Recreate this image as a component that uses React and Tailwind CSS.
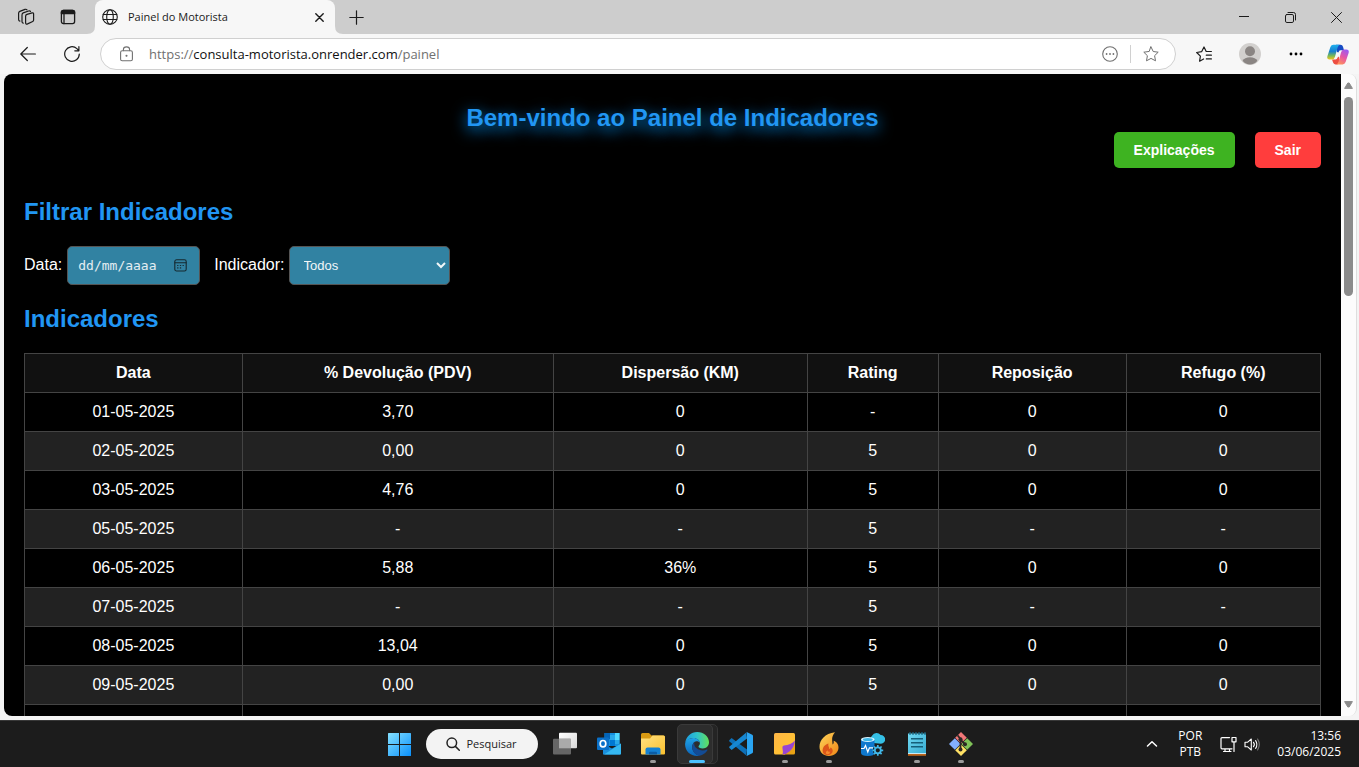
import React from "react";

const rows = [
  ["01-05-2025", "3,70", "0", "-", "0", "0"],
  ["02-05-2025", "0,00", "0", "5", "0", "0"],
  ["03-05-2025", "4,76", "0", "5", "0", "0"],
  ["05-05-2025", "-", "-", "5", "-", "-"],
  ["06-05-2025", "5,88", "36%", "5", "0", "0"],
  ["07-05-2025", "-", "-", "5", "-", "-"],
  ["08-05-2025", "13,04", "0", "5", "0", "0"],
  ["09-05-2025", "0,00", "0", "5", "0", "0"],
  ["", "", "", "", "", ""],
];

const headers = ["Data", "% Devolução (PDV)", "Dispersão (KM)", "Rating", "Reposição", "Refugo (%)"];

function Line({ size = 16, className = "", width = 1.1, box = 16, children }) {
  return (
    <svg
      width={size}
      height={size}
      viewBox={`0 0 ${box} ${box}`}
      fill="none"
      stroke="currentColor"
      strokeWidth={width}
      strokeLinecap="round"
      strokeLinejoin="round"
      className={`shrink-0 ${className}`}
      aria-hidden="true"
    >
      {children}
    </svg>
  );
}

function IconButton({ label, className = "", children }) {
  return (
    <button type="button" aria-label={label} className={`flex shrink-0 items-center justify-center ${className}`}>
      {children}
    </button>
  );
}

function TabStrip() {
  return (
    <div className="flex h-[34px] shrink-0 items-center bg-[#cdcdcd] text-[#1b1b1b]">
      <div className="flex gap-6 pr-[10px] pl-[17px]">
        <IconButton label="Workspaces">
          <Line size={18} box={18} width={1.2}>
            <path d="M10 6.4 15.1 4.9Q16.6 4.6 16.6 6V12Q16.6 13.1 15.7 13.5L10.6 15.9Q8.6 16.7 8.6 14.8V8.2Q8.6 6.8 10 6.4Z" />
            <path d="M6.2 15.2Q5 15 5 13.5V6.9Q5 5.5 6.2 4.9L11.6 3Q12.9 2.6 13.5 3.4" />
            <path d="M2.9 13.1Q1.6 12.8 1.6 11.4V5.2Q1.6 3.9 2.8 3.4L8 1.4Q9.3 1 10 1.8" />
          </Line>
        </IconButton>
        <IconButton label="Menu de guias">
          <Line size={18} box={18} width={1.3}>
            <rect x="2.4" y="2.4" width="13.2" height="13.2" rx="2" />
            <path d="M2.4 4.5Q2.4 2.4 4.5 2.4H13.5Q15.6 2.4 15.6 4.5V5.6H2.4Z" fill="currentColor" />
            <path d="M5 6v9.5" />
          </Line>
        </IconButton>
      </div>
      <svg width="8" height="8" className="shrink-0 self-end" aria-hidden="true">
        <path d="M8 0V8H0Q8 8 8 0Z" fill="#f7f7f7" />
      </svg>
      <div className="flex h-full w-60 items-center rounded-t-lg bg-[#f7f7f7] pr-2 pl-[7px]">
        <Line size={16} width={1.1} className="mr-[10px]">
          <circle cx="8" cy="8" r="7.3" />
          <ellipse cx="8" cy="8" rx="3.3" ry="7.3" />
          <path d="M1.2 5.5H14.8M1.2 10.5H14.8" />
        </Line>
        <span className="flex-1 truncate text-[11px]">Painel do Motorista</span>
        <IconButton label="Fechar guia" className="size-4">
          <Line size={9} box={9} width={1.4}>
            <path d="M.8.8 8.2 8.2M8.2.8.8 8.2" />
          </Line>
        </IconButton>
      </div>
      <svg width="8" height="8" className="shrink-0 self-end" aria-hidden="true">
        <path d="M0 0V8H8Q0 8 0 0Z" fill="#f7f7f7" />
      </svg>
      <IconButton label="Nova guia" className="ml-[6px]">
        <Line size={15} box={15} width={1.2}>
          <path d="M7.5.8V14.2M.8 7.5H14.2" />
        </Line>
      </IconButton>
      <div className="ml-auto flex h-full">
        <IconButton label="Minimizar" className="w-[46px]">
          <Line size={10} box={10} width={1}>
            <path d="M0 4.5H10" />
          </Line>
        </IconButton>
        <IconButton label="Restaurar" className="w-[46px]">
          <Line size={11} box={11} width={1}>
            <rect x=".5" y="2.5" width="8" height="8" rx="1.4" />
            <path d="M3 .5H8.5Q10.5.5 10.5 2.5V8" />
          </Line>
        </IconButton>
        <IconButton label="Fechar" className="w-[46px]">
          <Line size={11} box={11} width={1}>
            <path d="M.5.5 10.5 10.5M10.5.5.5 10.5" />
          </Line>
        </IconButton>
      </div>
    </div>
  );
}

const star = "M8 .9 10.2 5.5 15.2 6.2 11.6 9.7 12.5 14.8 8 12.4 3.5 14.8 4.4 9.7 .8 6.2 5.8 5.5Z";

function Toolbar() {
  return (
    <div className="flex h-10 shrink-0 items-center bg-[#f7f7f7] pr-[2px] pl-[6px] text-[#1b1b1b]">
      <IconButton label="Voltar" className="w-11">
        <Line size={16} width={1.2}>
          <path d="M15.4 8H.8M7.3 1.5.8 8l6.5 6.5" />
        </Line>
      </IconButton>
      <IconButton label="Atualizar" className="w-11">
        <Line size={16} width={1.2}>
          <path d="M15.3 8A7.3 7.3 0 1 1 12.9 2.6L14.8 4.6M14.9.7V4.8H10.8" />
        </Line>
      </IconButton>
      <div className="ml-[6px] flex h-8 min-w-0 flex-1 items-center rounded-full border border-[#d0d0d0] bg-white pr-4 pl-[18px] text-[#707070]">
        <Line size={16} width={1.1} className="mr-[14px]">
          <rect x="1.6" y="4.8" width="11.8" height="10" rx="1.6" />
          <path d="M4.4 4.6V3.4Q4.4.9 7.5.9T10.6 3.4V4.6" />
          <circle cx="7.5" cy="9.8" r=".5" fill="currentColor" />
        </Line>
        <div className="min-w-0 flex-1 truncate pt-px text-[13px]">
          https://<span className="text-[#111]">consulta-motorista.onrender.com</span>/painel
        </div>
        <IconButton label="Mais opções do site">
          <Line size={16} width={1.1}>
            <circle cx="8" cy="8" r="7.3" />
            <g fill="currentColor" stroke="none">
              <circle cx="4.6" cy="8" r=".9" />
              <circle cx="8" cy="8" r=".9" />
              <circle cx="11.4" cy="8" r=".9" />
            </g>
          </Line>
        </IconButton>
        <span className="mx-3 h-[18px] w-px bg-[#d0d0d0]" />
        <IconButton label="Adicionar aos favoritos">
          <Line size={16} width={1}>
            <path d={star} />
          </Line>
        </IconButton>
      </div>
      <IconButton label="Favoritos" className="ml-[5px] w-[46px]">
        <Line size={16} width={1.2}>
          <path d="M7.6 13 3.6 15.2 4.4 10.2.7 6.5 5.6 5.7 8 1 10.2 5.5H15.4M10.3 9.2H15.4M10.3 12.9H15.4" />
        </Line>
      </IconButton>
      <IconButton label="Perfil" className="w-[46px]">
        <svg width="22" height="22" viewBox="0 0 22 22" aria-hidden="true">
          <circle cx="11" cy="11" r="11" fill="#d2d0ce" />
          <circle cx="11" cy="8.3" r="5" fill="#8a8583" />
          <path d="M3.6 17.8Q5.5 14.3 11 14.3T18.4 17.8Q15.4 21.6 11 21.6T3.6 17.8Z" fill="#8a8583" />
        </svg>
      </IconButton>
      <IconButton label="Configurações" className="w-[46px]">
        <svg width="14" height="4" aria-hidden="true">
          <circle cx="2" cy="2" r="1.4" />
          <circle cx="7" cy="2" r="1.4" />
          <circle cx="12" cy="2" r="1.4" />
        </svg>
      </IconButton>
      <IconButton label="Copilot" className="w-[38px]">
        <svg width="22" height="21" viewBox="0 0 22 21" aria-hidden="true">
          <defs>
            <linearGradient id="cpA" x1="0" y1="0" x2="0" y2="1">
              <stop offset="0" stopColor="#1fb0ee" />
              <stop offset=".45" stopColor="#1680cf" />
              <stop offset=".75" stopColor="#78b956" />
              <stop offset="1" stopColor="#f4c51c" />
            </linearGradient>
            <linearGradient id="cpB" x1=".8" y1="0" x2=".3" y2="1">
              <stop offset="0" stopColor="#9a58f5" />
              <stop offset=".5" stopColor="#e755a5" />
              <stop offset="1" stopColor="#ff925b" />
            </linearGradient>
          </defs>
          <path d="M9 .7H13.5Q15.5.7 16 2.7L17 6.2H13.5Q12 6.2 11.4 8.4L10 8Z" fill="#164bc4" />
          <path d="M5 15.4H8.5Q10 15.4 10.6 13.4L12 12.5 12 18.4Q11.5 20.4 10 20.4H8.4Q6.6 20.4 6.1 18.6Z" fill="#ed4e42" />
          <path d="M6.4.7H12.8Q11.2 1.2 10.6 3.4L8 12.7Q7.2 15.5 5 15.5H2.5Q-.5 15.5.4 12.2L3.4 3Q4.2.7 6.4.7Z" fill="url(#cpA)" />
          <path d="M15.6 20.4H9.2Q10.9 19.9 11.5 17.7L14 8.5Q14.8 5.6 17 5.6H19.5Q22.5 5.6 21.6 9L18.6 18.1Q17.8 20.4 15.6 20.4Z" fill="url(#cpB)" />
        </svg>
      </IconButton>
    </div>
  );
}

function Filters() {
  return (
    <form className="mt-5 flex items-center">
      <label htmlFor="data" className="mr-[5px] pb-[2px]">Data:</label>
      <div className="relative mr-[14px]">
        <input
          id="data"
          type="text"
          placeholder="dd/mm/aaaa"
          className="block h-[39px] w-[133px] rounded-[5px] border border-[#555] bg-[#3182a2] pr-8 pl-[10px] font-['DejaVu_Sans_Mono',monospace] text-[13px] text-[#e4eef2] placeholder:text-[#e4eef2]"
        />
        <button type="button" aria-label="Mostrar o seletor de data" className="absolute inset-y-0 right-[13px] text-[#16292f]">
          <Line size={13} box={13} width={1.1}>
            <rect x=".8" y=".8" width="11.4" height="11.2" rx="1.8" />
            <path d="M1 3.8H12" />
            <path d="M3.6 8.9H4M6.3 8.9H6.7M6.3 6.5H6.7M9 6.5H9.4M3.6 6.5H4" />
          </Line>
        </button>
      </div>
      <label htmlFor="indicador" className="mr-1 pb-[2px]">Indicador:</label>
      <select
        id="indicador"
        className="h-[39px] w-[161px] rounded-[5px] border border-[#555] bg-[#3182a2] pl-[10px] text-[13px] text-[#f2f7f9]"
      >
        <option>Todos</option>
        <option>Devolução</option>
        <option>Dispersão</option>
        <option>Rating</option>
        <option>Reposição</option>
        <option>Refugo</option>
      </select>
    </form>
  );
}

function Painel() {
  return (
    <main className="min-w-0 flex-1 overflow-hidden bg-black px-5 pt-[30px] font-['Liberation_Sans',Arial,sans-serif] text-base text-white">
      <h1 className="text-center text-2xl leading-7 font-bold text-[#2196f3] [text-shadow:0_4px_15px_#0099ff]">
        Bem-vindo ao Painel de Indicadores
      </h1>
      <div className="flex justify-end gap-5 text-sm leading-4 font-bold">
        <button type="button" className="rounded-[5px] bg-[#3eb321] px-5 py-[10px]">Explicações</button>
        <button type="button" className="rounded-[5px] bg-[#ff3d3d] px-5 py-[10px]">Sair</button>
      </div>
      <h2 className="mt-[30px] text-2xl leading-7 font-bold text-[#2196f3]">Filtrar Indicadores</h2>
      <Filters />
      <h2 className="mt-5 text-2xl leading-7 font-bold text-[#2196f3]">Indicadores</h2>
      <table className="mt-5 w-full table-fixed border-collapse text-center leading-[18px]">
        <colgroup>
          <col className="w-[16.8%]" />
          <col className="w-[24%]" />
          <col className="w-[19.6%]" />
          <col className="w-[10.1%]" />
          <col className="w-[14.5%]" />
          <col className="w-[15%]" />
        </colgroup>
        <thead>
          <tr className="bg-[#111]">
            {headers.map((h) => (
              <th key={h} className="border border-[#444] p-[10px] font-bold">{h}</th>
            ))}
          </tr>
        </thead>
        <tbody>
          {rows.map((r) => (
            <tr key={r[0]} className="even:bg-[#222]">
              {r.map((c, i) => (
                <td key={i} className="h-[39px] border border-[#444] p-[10px]">{c}</td>
              ))}
            </tr>
          ))}
        </tbody>
      </table>
    </main>
  );
}

function Scrollbar() {
  return (
    <div className="flex w-[15px] shrink-0 flex-col items-center bg-[#fcfcfc] pt-2 pb-2 text-[#8b8b8b]">
      <svg width="9" height="7" aria-hidden="true">
        <path d="M3.8 1H5.2L8.4 6.4H.6Z" fill="currentColor" stroke="currentColor" strokeLinejoin="round" />
      </svg>
      <div className="mt-2 flex w-[9px] flex-1 flex-col">
        <div className="h-[33%] rounded-full bg-[#8b8b8b]" />
      </div>
      <svg width="9" height="7" aria-hidden="true">
        <path d="M3.8 6H5.2L8.4.6H.6Z" fill="currentColor" stroke="currentColor" strokeLinejoin="round" />
      </svg>
    </div>
  );
}

function Task({ label, running, active, children }) {
  return (
    <button type="button" aria-label={label} className="relative flex h-full w-11 items-center justify-center">
      {active && (
        <>
          <span className="absolute top-[3px] right-[1px] h-10 w-9 rounded-[5px] border border-[#353535] bg-[#242424]" />
          <span className="absolute top-[3px] right-[6px] h-10 w-9 rounded-[5px] border border-[#3a3a3a] bg-[#2d2d2d]" />
        </>
      )}
      <span className="relative">{children}</span>
      {running && <span className="absolute bottom-1 h-[3px] w-[6px] rounded-full bg-[#9a9a9a]" />}
      {active && <span className="absolute bottom-1 h-[3px] w-4 rounded-full bg-[#4cc2ff]" />}
    </button>
  );
}

function Art({ children, id, stops }) {
  return (
    <svg width="24" height="24" viewBox="0 0 24 24" aria-hidden="true" className="block">
      {id && (
        <defs>
          <linearGradient id={id} x1="0" y1="0" x2="1" y2="1">
            <stop offset="0" stopColor={stops[0]} />
            <stop offset="1" stopColor={stops[1]} />
          </linearGradient>
        </defs>
      )}
      {children}
    </svg>
  );
}

function Taskbar() {
  return (
    <footer className="grid h-[47px] shrink-0 grid-cols-[1fr_auto_1fr] border-t border-[#383838] bg-[#1c1c1c] text-white">
      <div />
      <div className="flex items-center">
        <Task label="Iniciar">
          <svg width="24" height="24" viewBox="0 0 24 24" aria-hidden="true" className="block">
            <defs>
              <linearGradient id="win" gradientUnits="userSpaceOnUse" x1="0" y1="0" x2="24" y2="24">
                <stop offset="0" stopColor="#8ae4ff" />
                <stop offset="1" stopColor="#0a90fb" />
              </linearGradient>
            </defs>
            <g fill="url(#win)">
              <path d="M1 1.5Q1 1 1.5 1H12V12H1Z" />
              <path d="M13 1H23.5Q24 1 24 1.5V12H13Z" />
              <path d="M1 13H12V24H1.5Q1 24 1 23.5Z" />
              <path d="M13 13H24V23.5Q24 24 23.5 24H13Z" />
            </g>
          </svg>
        </Task>
        <button type="button" className="mx-[5px] flex h-[30px] w-28 items-center justify-center gap-[6px] rounded-full bg-[#f3f3f3] text-[11px] text-[#222]">
          <Line size={14} box={14} width={1.5}>
            <circle cx="5.8" cy="5.8" r="4.8" />
            <path d="M9.4 9.4 13.3 13.3" />
          </Line>
          Pesquisar
        </button>
        <Task label="Visão de tarefas">
          <Art id="tv" stops={["#ffffff", "#d8d8d8"]}>
            <rect x="6" y=".8" width="18" height="15.5" rx="1" fill="url(#tv)" />
            <rect x="0" y="6.8" width="18" height="15.7" rx="1" fill="#666" />
            <path d="M6 6.8H18V16.3H6Z" fill="#aaa" />
          </Art>
        </Task>
        <Task label="Outlook">
          <Art>
            <path d="M7.5 1H22.5V14H7.5Z" fill="#1490df" />
            <path d="M7.5 1H13V7H7.5Z" fill="#0364b8" />
            <path d="M13 3H18V8H13ZM18 8H22.5V12H18Z" fill="#28a8ea" />
            <path d="M18 1H22.5V8H18Z" fill="#50d9ff" />
            <path d="M13 8H18V14H13Z" fill="#0078d4" />
            <path d="M6 12 15 16.5 24 11.5V21.5Q24 22.5 23 22.5H6Z" fill="#1a8fdc" />
            <path d="M7 22.5 24 11.5V21.5Q24 22.5 23 22.5Z" fill="#35b8f1" />
            <rect x="0" y="5.5" width="12" height="12.5" rx="1" fill="#0a70c8" />
            <ellipse cx="6" cy="11.7" rx="2.8" ry="3.2" fill="none" stroke="#fff" strokeWidth="1.7" />
          </Art>
        </Task>
        <Task label="Explorador de Arquivos" running>
          <Art id="fol" stops={["#ffe283", "#fbc02d"]}>
            <path d="M0 7V2.5Q0 1 1.5 1H8L10.5 3.5H22.5Q24 3.5 24 5V8Z" fill="#d99a12" />
            <path d="M0 6.5H9L11.5 3.5H22.5Q24 3.5 24 5V21.5Q24 22.5 23 22.5H1Q0 22.5 0 21.5Z" fill="url(#fol)" />
            <path d="M4.5 22.5V17.5Q4.5 15.5 6.5 15.5H17.5Q19.5 15.5 19.5 17.5V22.5Z" fill="#1381d3" />
            <path d="M8 20.8Q8 19.8 9 19.8H15Q16 19.8 16 20.8V22.5H8Z" fill="#0b5da6" />
          </Art>
        </Task>
        <Task label="Microsoft Edge" active>
          <svg width="24" height="24" viewBox="0 0 24 24" aria-hidden="true" className="block">
            <defs>
              <linearGradient id="edTop" x1="0" y1=".5" x2="1" y2=".5">
                <stop offset="0" stopColor="#1c9ee5" />
                <stop offset=".5" stopColor="#2fc3c8" />
                <stop offset="1" stopColor="#62e05a" />
              </linearGradient>
              <linearGradient id="edLow" x1="0" y1="0" x2="0" y2="1">
                <stop offset="0" stopColor="#1fa3e8" />
                <stop offset="1" stopColor="#0b63b8" />
              </linearGradient>
            </defs>
            <path d="M.3 10.5C1.2 4.5 6 .1 12.2.1 18.8.1 24 4.8 24 10.3 24 14 21.3 16.4 17.8 16.4 14.8 16.4 13.5 15.4 13.5 14.5 13.5 13.8 14.9 13.2 14.9 11.3 14.9 8.4 12 6 8.3 6 5 6 1.8 7.8.3 10.5Z" fill="url(#edTop)" />
            <path d="M.1 12C.3 8.8 3.6 6 8.3 6 11.8 6 14.7 8.2 14.9 10.8 14.2 9.8 13 9.3 11.5 9.3 9 9.3 7.2 12.2 7.2 15.2 7.2 19 10 22.6 14.6 23.7 6.6 25.2-.2 19.5.1 12Z" fill="url(#edLow)" />
            <path d="M9.8 10C8.2 11.3 7.2 13 7.2 15.2 7.2 19.3 10.5 23.3 14.6 23.7 17.8 23 20.8 21 22.4 18.2 22.7 17.6 22.3 17.2 21.7 17.5 20.6 18.1 19.2 18.4 17.7 18.4 13.1 18.4 9.2 15.3 9.2 11.8 9.2 11.1 9.4 10.5 9.8 10Z" fill="#134b94" />
          </svg>
        </Task>
        <Task label="Visual Studio Code">
          <Art>
            <path d="M2.6 6.1.5 8Q-.2 8.7.5 9.4L17.3 23.6 18 17.5Z" fill="#0d70b8" />
            <path d="M2.6 17.9.5 16Q-.2 15.3.5 14.6L17.3.4 18 6.5Z" fill="#1687d2" />
            <path d="M17.2.3Q17.7.1 18.2.3L23.2 2.7Q24 3.1 24 4V20Q24 20.9 23.2 21.3L18.2 23.7Q17.7 23.9 17.2 23.7Q18 23.4 18 22.3V1.7Q18 .6 17.2.3Z" fill="#2aa5f2" />
          </Art>
        </Task>
        <Task label="Notas Autoadesivas" running>
          <Art id="note" stops={["#ffb547", "#ffc928"]}>
            <path d="M1 2.5Q1 1 2.5 1H20.5Q22 1 22 2.5V11L12 22.5H2.5Q1 22.5 1 21Z" fill="url(#note)" />
            <path d="M9.5 22.5 22 9.5V21Q22 22.5 20.5 22.5Z" fill="#e9a315" />
            <path d="M9.5 22.5Q10.3 20 9.4 15.5 9.2 13.6 10.8 13.4 18 13 22 8.5 21 15.5 17 19 13.5 22.3 9.5 22.5Z" fill="#9745d3" />
          </Art>
        </Task>
        <Task label="Chama" running>
          <Art id="flame" stops={["#ffd65b", "#ee8617"]}>
            <path d="M18 .3C8 1.5 2.5 8 2.5 14.8 2.5 20.5 6.5 24 12 24S21.5 20.2 21.5 15.5C21.5 11.5 18.5 9.4 16.6 8.8 17 10.5 16.6 12 15.6 12.6 15.5 8 13.8 5.4 18 .3Z" fill="url(#flame)" />
            <path d="M11.5 11.5C7.5 12.5 5.6 15.8 5.6 18.5 5.6 21.3 7.7 23.2 10.6 23.2S15.7 21.2 15.7 18.8C15.7 16.6 14.3 15.8 13.4 15.5 13.4 16.4 13 17 12.3 17 12.2 14.7 10.7 14 11.5 11.5Z" fill="#dc5519" />
            <path d="M10.6 18.3Q8.5 19.7 8.8 21.1T11 22.3 12.9 20.7 11.7 19.7Q10.6 19.7 10.6 18.3Z" fill="#f5892c" />
          </Art>
        </Task>
        <Task label="Banco de dados">
          <Art>
            <path d="M12.5 11A4.6 4.6 0 0 1 11.2 3.4 5 5 0 0 1 19.6 3 4.3 4.3 0 0 1 20 11.8Z" fill="#35c0e6" />
            <path d="M0 7.4H13.5V21Q13.5 24 6.8 24T0 21Z" fill="#0f78cd" />
            <ellipse cx="6.8" cy="7.5" rx="6.8" ry="2.6" fill="#d9f4ff" />
            <ellipse cx="6.8" cy="7.5" rx="5" ry="1.5" fill="#3cb6e8" />
            <path d="M0 16.5H3L4.5 13.5 6.8 20 8.4 15.8H12" fill="none" stroke="#fff" strokeWidth="1.2" />
            <circle cx="16.8" cy="18.3" r="5" fill="#1c1c1c" />
            <circle cx="16.8" cy="18.3" r="3" fill="none" stroke="#42b8e8" strokeWidth="1.8" />
            <path d="M16.8 12.9V15.3M16.8 21.3V23.7M11.4 18.3H13.8M19.8 18.3H22.2M13 14.5 14.7 16.2M18.9 20.4 20.6 22.1M13 22.1 14.7 20.4M18.9 16.2 20.6 14.5" stroke="#42b8e8" strokeWidth="1.7" />
          </Art>
        </Task>
        <Task label="Bloco de Notas" running>
          <Art id="pad" stops={["#70d9f3", "#36abd0"]}>
            <path d="M3 1.5H21V22H3Z" fill="url(#pad)" />
            <path d="M3 21.3H21V22H3Z" fill="#fff" />
            <path d="M3 22H21V23.8H3Z" fill="#ba641c" />
            <path d="M6 6.8H18M6 10.8H18M6 14.8H18" stroke="#155f79" strokeWidth="1.5" />
            <path d="M5 0V3M8 0V3M11 0V3M14 0V3M17 0V3M20 0V3" stroke="#176a88" strokeWidth="1.2" />
          </Art>
        </Task>
        <Task label="Git" running>
          <Art>
            <path d="M12 0 17.8 5.8 12 11.6 6.2 5.8Z" fill="#f17777" />
            <path d="M18.2 6.2 24 12 18.2 17.8 12.4 12Z" fill="#7fc158" />
            <path d="M12 12.4 17.8 18.2 12 24 6.2 18.2Z" fill="#ffe165" />
            <path d="M5.8 6.2 11.6 12 5.8 17.8 0 12Z" fill="#82afff" />
            <path d="M8.5 3.2 11.5 7V17M12 8.2 16 12.2" stroke="#2c2625" strokeWidth="1.8" fill="none" />
            <g fill="#2c2625">
              <circle cx="11.5" cy="7.2" r="2" />
              <circle cx="16" cy="12.3" r="2" />
              <circle cx="11.5" cy="17.6" r="2" />
            </g>
          </Art>
        </Task>
      </div>
      <div className="flex items-center justify-end pr-[18px] text-[12px] leading-4">
        <IconButton label="Ícones ocultos" className="mr-5">
          <Line size={12} box={12} width={1.5}>
            <path d="M1.5 8 6 3.8 10.5 8" />
          </Line>
        </IconButton>
        <div className="mr-[18px] text-center">
          <div>POR</div>
          <div>PTB</div>
        </div>
        <div className="mr-4 flex items-center gap-[7px]">
          <Line size={17} box={17} width={1.2}>
            <path d="M9.5 1.6H2Q1 1.6 1 2.6V11.8Q1 12.8 2 12.8H12M5 12.8V15.5M9.5 12.8V15.5M3.5 15.5H11" />
            <path d="M12 1.5H16V5.8H12ZM14 5.8V15.5" />
          </Line>
          <Line size={17} box={17} width={1.1}>
            <path d="M1 6.2H3.7L7.3 3V14L3.7 10.8H1Z" />
            <path d="M9.5 6.3Q11.2 8.5 9.5 10.7M11.6 4.6Q14.2 8.5 11.6 12.4" />
            <path d="M13.6 3Q17 8.5 13.6 14" stroke="#777" />
          </Line>
        </div>
        <time className="text-right">
          <div>13:56</div>
          <div>03/06/2025</div>
        </time>
      </div>
    </footer>
  );
}

export default function App() {
  return (
    <div className="flex h-screen flex-col overflow-hidden bg-[#f4f4f4] font-['Open_Sans','Noto_Sans',sans-serif]">
      <TabStrip />
      <Toolbar />
      <div className="mr-[2px] mb-1 ml-1 flex min-h-0 flex-1 overflow-hidden rounded-lg border-r border-[#dedede]">
        <Painel />
        <Scrollbar />
      </div>
      <Taskbar />
    </div>
  );
}
